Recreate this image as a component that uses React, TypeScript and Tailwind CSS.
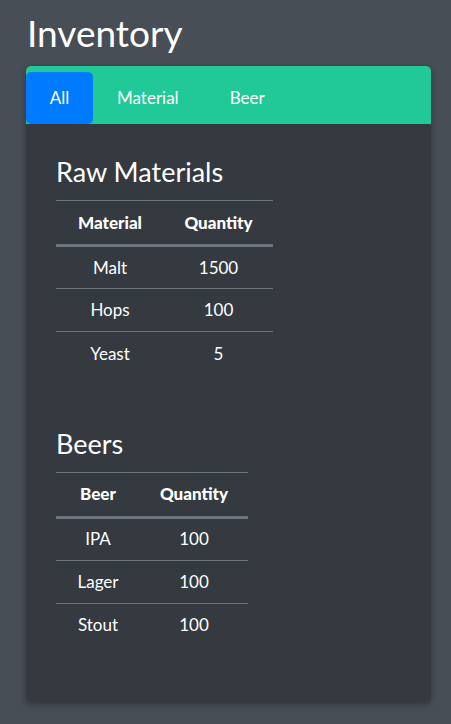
const materials = [
  { name: "Malt", qty: 1500 },
  { name: "Hops", qty: 100 },
  { name: "Yeast", qty: 5 },
];

const beers = [
  { name: "IPA", qty: 100 },
  { name: "Lager", qty: 100 },
  { name: "Stout", qty: 100 },
];

function StockTable({ label, rows, firstW, secondW }: { label: string; rows: { name: string; qty: number }[]; firstW: string; secondW: string }) {
  return (
    <table className="border-collapse text-center text-[17px] text-white">
      <thead>
        <tr className="border-t border-[#6c757d]">
          <th className={`${firstW} h-[45px] font-black border-b-[3px] border-[#6c757d]`}>{label}</th>
          <th className={`${secondW} h-[45px] font-black border-b-[3px] border-[#6c757d]`}>Quantity</th>
        </tr>
      </thead>
      <tbody>
        {rows.map((r, i) => (
          <tr key={r.name} className={i > 0 ? "border-t border-[#6c757d]" : ""}>
            <td className="h-[43px]">{r.name}</td>
            <td className="h-[43px]">{r.qty}</td>
          </tr>
        ))}
      </tbody>
    </table>
  );
}

export default function App() {
  return (
    <div className="min-h-[724px] bg-[#474e56] pt-[10px] font-['Lato',sans-serif]">
      <h1 className="ml-[27px] text-[37px] leading-[46px] text-white">Inventory</h1>

      <div className="ml-[26px] mt-[10px] w-[405px] rounded-[5px] bg-[#343a40] shadow-[0_2px_6px_rgba(0,0,0,0.35)]">
        {/* TABS */}
        <div className="flex h-[58px] items-end rounded-t-[5px] bg-[#20c997]">
          <div className="flex h-[52px] w-[67px] items-center justify-center rounded-[5px] bg-[#007bff] text-[17px] text-white">All</div>
          <div className="flex h-[52px] items-center pl-[24px] text-[17px] text-white">Material</div>
          <div className="flex h-[52px] items-center pl-[51px] text-[17px] text-white">Beer</div>
        </div>

        {/* CONTENT */}
        <div className="px-[30px] pt-[30px] pb-[56px]">
          <h2 className="mb-[10px] text-[27px] leading-[36px] text-white">Raw Materials</h2>
          <StockTable label="Material" rows={materials} firstW="w-[108px]" secondW="w-[109px]" />

          <h2 className="mt-[51px] mb-[10px] text-[27px] leading-[36px] text-white">Beers</h2>
          <StockTable label="Beer" rows={beers} firstW="w-[84px]" secondW="w-[108px]" />
        </div>
      </div>
    </div>
  );
}
